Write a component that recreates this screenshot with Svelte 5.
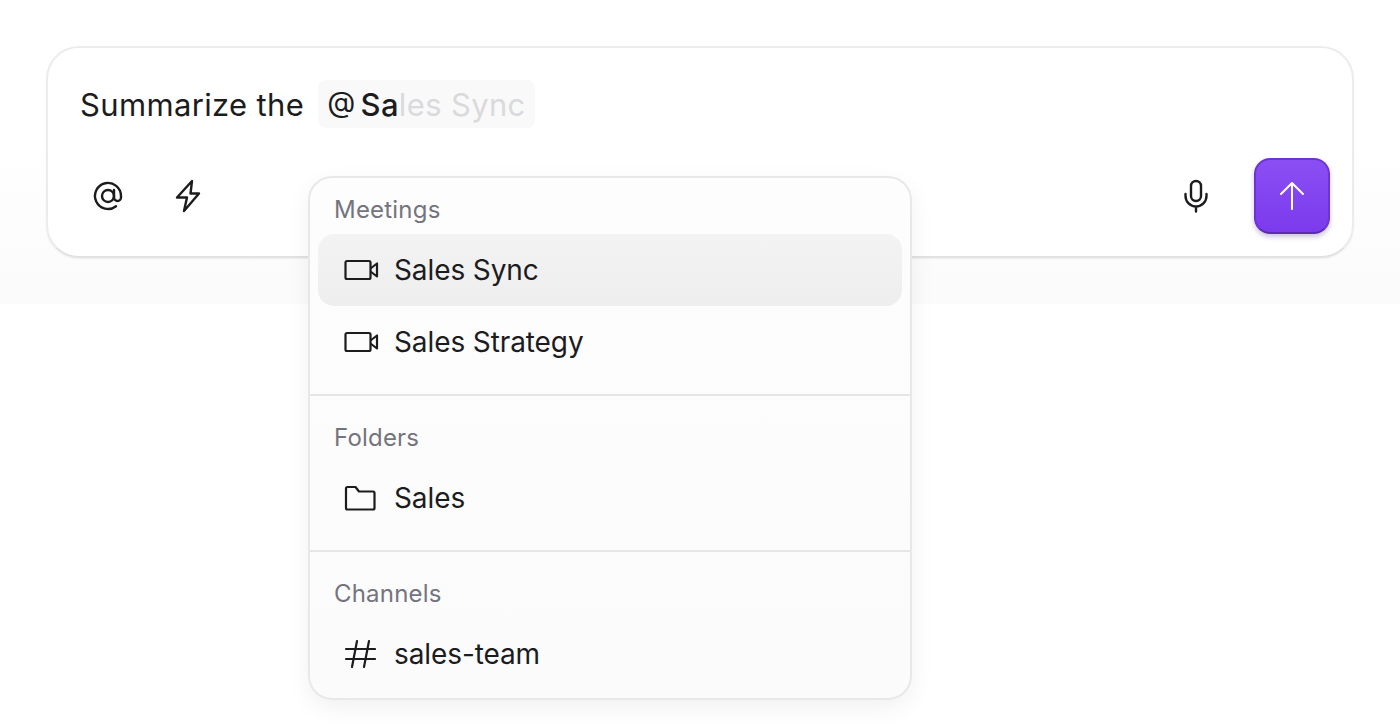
<script>
	const sections = [
		{ label: 'Meetings', items: [{ name: 'Sales Sync', icon: 'video', active: true }, { name: 'Sales Strategy', icon: 'video' }] },
		{ label: 'Folders', items: [{ name: 'Sales', icon: 'folder' }] },
		{ label: 'Channels', items: [{ name: 'sales-team', icon: 'hash' }] }
	];
</script>

<main>
	<section class="stage">
		<div class="composer">
			<div class="prompt">
				<span>Summarize the</span>
				<span class="mention"><span class="at">@</span><span class="typed">Sa</span><span class="hint">les Sync</span></span>
			</div>
			<div class="toolbar">
				<button class="tool" aria-label="Mention">
					<svg width="32" height="32" viewBox="0 0 32 32" fill="none" stroke="#1c1c1e" stroke-width="2.400" stroke-linecap="round" stroke-linejoin="round">
						<circle cx="16" cy="16" r="6" />
						<path d="M22 10v7.500a3.500 3.500 0 0 0 7 0V16a13 13 0 1 0-5 10.200" />
					</svg>
				</button>
				<button class="tool" aria-label="Shortcuts">
					<svg width="28" height="36" viewBox="0 0 28 36" fill="none" stroke="#1c1c1e" stroke-width="2.400" stroke-linejoin="round">
						<path d="M18 3 3 19.500h10L10 33 25 15.500H16.500z" />
					</svg>
				</button>
				<span class="spacer"></span>
				<button class="tool mic" aria-label="Voice input">
					<svg width="28" height="34" viewBox="0 0 28 34" fill="none" stroke="#1c1c1e" stroke-width="2.400" stroke-linecap="round">
						<rect x="9" y="2" width="10" height="20" rx="5" />
						<path d="M3.500 15v2a10.500 10.500 0 0 0 21 0v-2M14 28v4.500" />
					</svg>
				</button>
				<button class="send" aria-label="Send">
					<svg width="28" height="30" viewBox="0 0 28 30" fill="none" stroke="#fff" stroke-width="2" stroke-linecap="round" stroke-linejoin="round">
						<path d="M14 28V2M3 13 14 2l11 11" />
					</svg>
				</button>
			</div>
		</div>
	</section>

	<div class="menu">
		{#each sections as section}
			<div class="group">
				<div class="label">{section.label}</div>
				{#each section.items as item}
					<div class="row" class:active={item.active}>
						<span class="row-icon">
							{#if item.icon === 'video'}
								<svg width="36" height="22" viewBox="0 0 36 22" fill="none" stroke="#1c1c1e" stroke-width="2.200" stroke-linejoin="round">
									<rect x="1.500" y="2" width="25" height="18" rx="1.500" />
									<path d="M26.500 9.500 33 4.500v13l-6.500-5" />
								</svg>
							{:else if item.icon === 'folder'}
								<svg width="32" height="26" viewBox="0 0 32 26" fill="none" stroke="#1c1c1e" stroke-width="2.200" stroke-linejoin="round">
									<path d="M2 3.500A1.500 1.500 0 0 1 3.500 2h8l3.500 4.500h14A1.500 1.500 0 0 1 30.500 8v15a1.500 1.500 0 0 1-1.500 1.500H3.500A1.500 1.500 0 0 1 2 23z" />
								</svg>
							{:else}
								<svg width="32" height="30" viewBox="0 0 32 30" fill="none" stroke="#1c1c1e" stroke-width="2.200" stroke-linecap="round">
									<path d="M2 10h29M2 20h29M13 2 8 28M25 2l-5 26" />
								</svg>
							{/if}
						</span>
						<span>{item.name}</span>
					</div>
				{/each}
			</div>
		{/each}
	</div>
</main>

<style>
	:global(body) {
		background: #fff;
		font-family: Inter, "Liberation Sans", sans-serif;
		color: #1c1c1e;
	}

	main {
		position: relative;
		height: 724px;
		overflow: hidden;
	}

	.stage {
		box-sizing: border-box;
		height: 304px;
		padding: 46px;
		background: linear-gradient(#fff 150px, #fbfbfb 280px);
	}

	.composer {
		box-sizing: border-box;
		height: 212px;
		padding: 32px 22px 22px 32px;
		background: #fff;
		border: 2px solid #ececee;
		border-bottom-color: #e2e2e4;
		border-radius: 33px;
		box-shadow: 0 1px 2px rgba(0, 0, 0, 0.06);
	}

	.prompt {
		display: flex;
		align-items: center;
		gap: 14px;
		height: 48px;
		font-size: 31px;
		letter-spacing: 0.35px;
	}

	.mention {
		display: flex;
		align-items: center;
		height: 48px;
		padding: 0 9px;
		background: #f9f9fa;
		border-radius: 8px;
	}

	.at {
		margin-right: 5px;
		margin-top: -6px;
		font-size: 29px;
	}

	.typed {
		font-weight: 500;
	}

	.hint {
		color: #dadadd;
	}

	.toolbar {
		display: flex;
		align-items: center;
		gap: 24px;
		height: 76px;
		margin-top: 30px;
	}

	.spacer {
		flex: 1;
	}

	.tool {
		display: flex;
		align-items: center;
		justify-content: center;
		width: 56px;
		height: 56px;
		padding: 0;
		background: none;
		border: 0;
	}

	.mic {
		margin-right: 6px;
	}

	.send {
		display: flex;
		align-items: center;
		justify-content: center;
		box-sizing: border-box;
		width: 76px;
		height: 76px;
		padding: 0;
		background: linear-gradient(#8a4ff3, #7c3aed);
		border: 2px solid #6d33d4;
		border-bottom-color: #5b2bb0;
		border-radius: 16px;
		box-shadow: 0 3px 5px rgba(60, 20, 130, 0.25);
	}

	.menu {
		position: absolute;
		top: 176px;
		left: 308px;
		box-sizing: border-box;
		width: 604px;
		height: 524px;
		background: linear-gradient(#fdfdfd, #fbfbfc);
		border: 2px solid #e8e8ea;
		border-radius: 24px;
		box-shadow: 0 8px 24px rgba(0, 0, 0, 0.06);
	}

	.group {
		padding: 8px 8px 16px;
	}

	.group + .group {
		padding-top: 18px;
		border-top: 2px solid #e6e6e8;
	}

	.group:last-child {
		padding-bottom: 8px;
	}

	.label {
		display: flex;
		align-items: center;
		height: 48px;
		padding: 0 0 1px 16px;
		box-sizing: border-box;
		font-size: 24px;
		color: #74747e;
		letter-spacing: 0.2px;
	}

	.row {
		display: flex;
		align-items: center;
		gap: 14px;
		height: 72px;
		padding-left: 26px;
		font-size: 28px;
		letter-spacing: -0.1px;
		border-radius: 16px;
	}

	.row.active {
		background: linear-gradient(#f3f3f4, #eeeeef);
	}

	.row-icon {
		display: flex;
		align-items: center;
		justify-content: flex-start;
		width: 36px;
	}
</style>
